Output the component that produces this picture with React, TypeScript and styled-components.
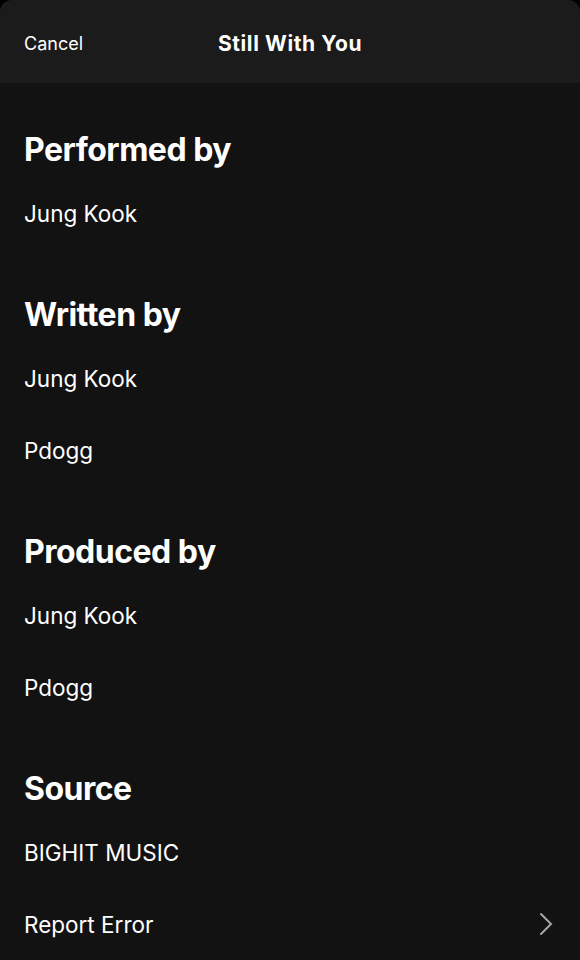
import styled, { createGlobalStyle } from 'styled-components'

const Global = createGlobalStyle`
  html, body {
    margin: 0;
    padding: 0;
    background: #000;
  }
  body {
    font-family: 'Inter', 'Noto Sans', sans-serif;
    -webkit-font-smoothing: antialiased;
  }
`

const Sheet = styled.div`
  width: 580px;
  height: 960px;
  background: #121212;
  border-radius: 12px 12px 0 0;
  overflow: hidden;
  color: #fff;
`

const Header = styled.header`
  height: 83px;
  background: #1b1b1b;
  display: grid;
  grid-template-columns: 1fr auto 1fr;
  align-items: center;
  padding: 4px 24px 0;
  box-sizing: border-box;
`

const Cancel = styled.button`
  justify-self: start;
  background: none;
  border: 0;
  padding: 0;
  color: #fff;
  font: 400 18px 'Inter', sans-serif;
`

const Title = styled.h1`
  margin: 0;
  font-size: 21px;
  font-weight: 700;
  letter-spacing: 0.6px;
`

const Body = styled.main`
  padding: 47px 24px 0;
  display: flex;
  flex-direction: column;
  gap: 46px;
`

const Section = styled.section`
  display: flex;
  flex-direction: column;
`

const Heading = styled.h2`
  margin: 0 0 7px;
  height: 40px;
  line-height: 40px;
  font-size: 32px;
  font-weight: 700;
  letter-spacing: -0.5px;
`

const Item = styled.div`
  height: 72px;
  display: flex;
  align-items: center;
  justify-content: space-between;
  font-size: 22.5px;
  color: #fff;
`

const Arrow = styled.svg`
  margin-right: 3px;
`

const Chevron = () => (
  <Arrow width="14" height="24" viewBox="0 0 14 24" fill="none">
    <path d="M2 2l10 10-10 10" stroke="#a7a7a7" strokeWidth="2" strokeLinecap="round" />
  </Arrow>
)

const credits = [
  { title: 'Performed by', names: ['Jung Kook'] },
  { title: 'Written by', names: ['Jung Kook', 'Pdogg'] },
  { title: 'Produced by', names: ['Jung Kook', 'Pdogg'] },
]

export default function App() {
  return (
    <>
      <Global />
      <Sheet>
        <Header>
          <Cancel>Cancel</Cancel>
          <Title>Still With You</Title>
          <span />
        </Header>
        <Body>
          {credits.map((c) => (
            <Section key={c.title}>
              <Heading>{c.title}</Heading>
              {c.names.map((n) => (
                <Item key={n}>{n}</Item>
              ))}
            </Section>
          ))}
          <Section>
            <Heading>Source</Heading>
            <Item>BIGHIT MUSIC</Item>
            <Item>
              Report Error
              <Chevron />
            </Item>
          </Section>
        </Body>
      </Sheet>
    </>
  )
}
